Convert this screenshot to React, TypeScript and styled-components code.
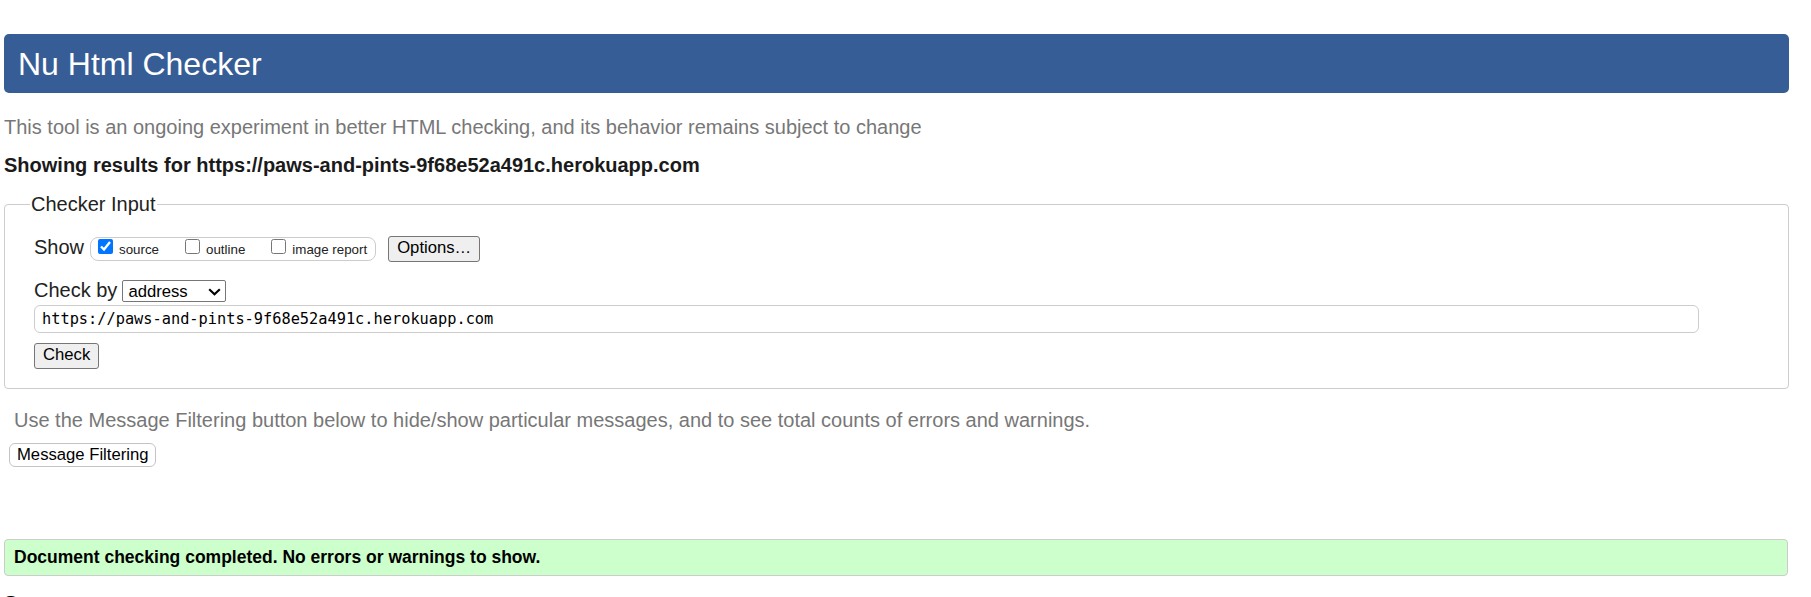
import React from "react";
import styled, { createGlobalStyle } from "styled-components";

const GlobalStyle = createGlobalStyle`
  html, body {
    margin: 0;
    padding: 0;
    background: #ffffff;
    overflow: hidden;
  }
  body {
    font-family: "Liberation Sans", Arial, sans-serif;
    color: #222222;
  }
`;

const Page = styled.div`
  width: 1785px;
  padding: 34px 0 0 4px;
`;

const Banner = styled.h1`
  margin: 0;
  height: 59px;
  line-height: 60px;
  padding: 0 14px;
  background: #365d95;
  color: #ffffff;
  font-size: 32px;
  font-weight: normal;
  border-radius: 5px;
`;

const Note = styled.p<{ $indent?: number; $top: number }>`
  margin: ${(p) => p.$top}px 0 0 ${(p) => p.$indent ?? 0}px;
  font-size: 20px;
  line-height: 24px;
  color: #777777;
`;

const Results = styled.p`
  margin: 14px 0 0;
  font-size: 20px;
  line-height: 24px;
  font-weight: bold;
  color: #1a1a1a;
`;

const Fieldset = styled.fieldset`
  margin: 15px 0 0;
  padding: 0 0 19px 29px;
  border: 1px solid #cccccc;
  border-radius: 4px;
  min-width: 0;
`;

const Legend = styled.legend`
  margin-left: -4px;
  padding: 0 1px;
  font-size: 20px;
  line-height: 24px;
  color: #222222;
`;

const Row = styled.div<{ $top: number }>`
  display: flex;
  align-items: flex-start;
  margin-top: ${(p) => p.$top}px;
`;

const RowLabel = styled.span`
  font-size: 20px;
  line-height: 24px;
  color: #222222;
`;

const ShowGroup = styled.div`
  display: flex;
  align-items: flex-start;
  gap: 26px;
  margin: 2px 0 0 6px;
  height: 22px;
  padding: 0 8px 0 7px;
  border: 1px solid #cccccc;
  border-radius: 8px;
`;

const Option = styled.label`
  display: flex;
  align-items: flex-start;
  gap: 6px;
  font-size: 13.33px;
  line-height: 23px;
  color: #222222;
`;

const Box = styled.input`
  width: 15px;
  height: 15px;
  margin: 1px 0 0;
`;

const Button = styled.button<{ $plain?: boolean }>`
  box-sizing: border-box;
  height: ${(p) => (p.$plain ? 24 : 26)}px;
  padding: 0 ${(p) => (p.$plain ? 7 : 8)}px 2px;
  font-family: "Liberation Sans", Arial, sans-serif;
  font-size: 16.67px;
  line-height: 22px;
  color: #000000;
  background: ${(p) => (p.$plain ? "#ffffff" : "#efefef")};
  border: 1px solid ${(p) => (p.$plain ? "#c4c4c4" : "#767676")};
  border-radius: ${(p) => (p.$plain ? 6 : 3)}px;
`;

const OptionsButton = styled(Button)`
  margin: 1px 0 0 12px;
`;

const SelectWrap = styled.div`
  position: relative;
  margin: 2px 0 0 5px;
  width: 104px;
  height: 22px;
`;

const Select = styled.select`
  appearance: none;
  box-sizing: border-box;
  display: block;
  width: 104px;
  height: 22px;
  padding: 0 0 0 5px;
  font-family: "Liberation Sans", Arial, sans-serif;
  font-size: 16.67px;
  color: #000000;
  background: #ffffff;
  border: 1px solid #767676;
  border-radius: 2px;
`;

const Chevron = styled.svg`
  position: absolute;
  left: 86px;
  top: 8px;
  pointer-events: none;
`;

const UrlInput = styled.input`
  display: block;
  box-sizing: border-box;
  width: 1665px;
  height: 28px;
  margin: 3px 0 0;
  padding: 0 7px;
  font-family: "DejaVu Sans Mono", "Liberation Mono", monospace;
  font-size: 15.3px;
  color: #000000;
  background: #ffffff;
  border: 1px solid #cccccc;
  border-radius: 6px;
  outline: none;
`;

const CheckButton = styled(Button)`
  display: block;
  margin-top: 10px;
`;

const FilterButton = styled(Button)`
  display: block;
  margin: 11px 0 0 5px;
`;

const Success = styled.p`
  margin: 72px 1px 0 0;
  height: 35px;
  padding: 0 9px;
  line-height: 35px;
  font-size: 17.5px;
  font-weight: bold;
  color: #000000;
  background: #ccffcc;
  border: 1px solid #cccccc;
  border-radius: 4px;
`;

const SectionTitle = styled.h2`
  margin: 15px 0 0 0;
  font-size: 20px;
  line-height: 24px;
  font-weight: bold;
  color: #000000;
`;

export default function App() {
  const url = "https://paws-and-pints-9f68e52a491c.herokuapp.com";
  return (
    <>
      <GlobalStyle />
      <Page>
        <Banner>Nu Html Checker</Banner>
        <Note $top={22}>
          This tool is an ongoing experiment in better HTML checking, and its behavior remains subject to change
        </Note>
        <Results>Showing results for {url}</Results>
        <Fieldset>
          <Legend>Checker Input</Legend>
          <Row $top={19}>
            <RowLabel>Show</RowLabel>
            <ShowGroup>
              <Option>
                <Box type="checkbox" defaultChecked />
                source
              </Option>
              <Option>
                <Box type="checkbox" />
                outline
              </Option>
              <Option>
                <Box type="checkbox" />
                image report
              </Option>
            </ShowGroup>
            <OptionsButton type="button">Options…</OptionsButton>
          </Row>
          <Row $top={16}>
            <RowLabel>Check by</RowLabel>
            <SelectWrap>
              <Select defaultValue="address">
                <option value="address">address</option>
                <option value="file">file upload</option>
                <option value="text">text input</option>
              </Select>
              <Chevron width="13" height="8" viewBox="0 0 13 8">
                <path d="M1.2 1.2 L6.5 6.3 L11.8 1.2" fill="none" stroke="#000" strokeWidth="2.1" />
              </Chevron>
            </SelectWrap>
          </Row>
          <UrlInput type="text" defaultValue={url} />
          <CheckButton type="button">Check</CheckButton>
        </Fieldset>
        <Note $top={19} $indent={10}>
          Use the Message Filtering button below to hide/show particular messages, and to see total counts of errors and warnings.
        </Note>
        <FilterButton type="button" $plain>
          Message Filtering
        </FilterButton>
        <Success>Document checking completed. No errors or warnings to show.</Success>
        <SectionTitle>Source</SectionTitle>
      </Page>
    </>
  );
}
